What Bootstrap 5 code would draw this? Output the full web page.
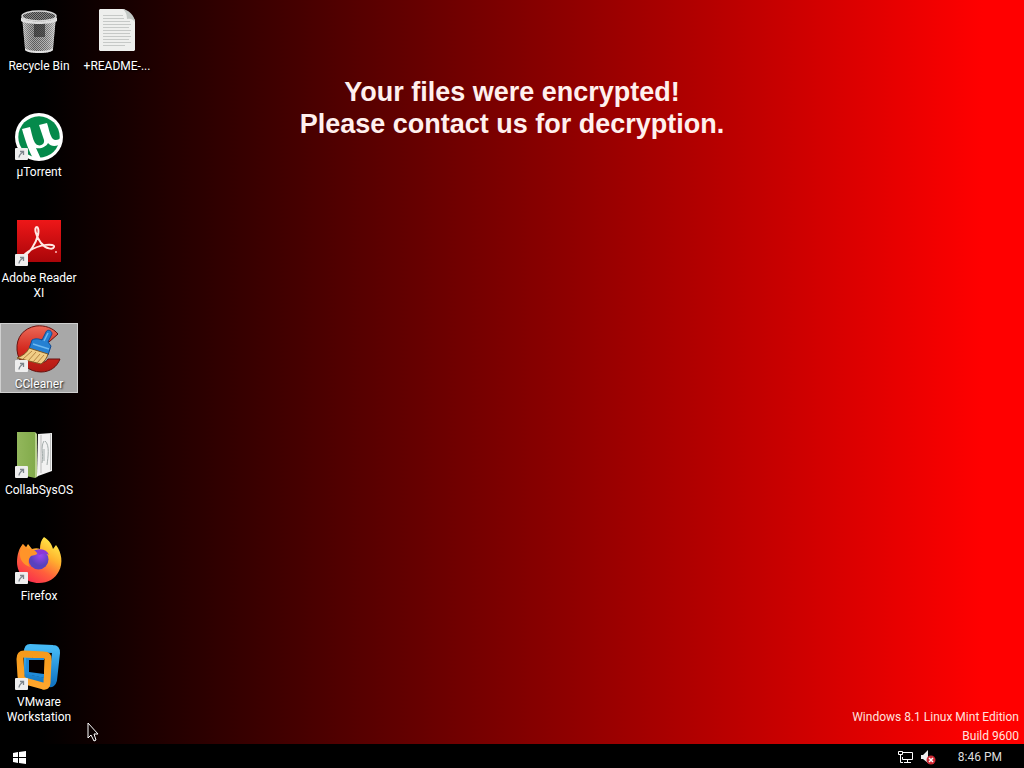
<!DOCTYPE html>
<html lang="en">
<head>
<meta charset="utf-8">
<meta name="viewport" content="width=device-width, initial-scale=1">
<title>Desktop</title>
<link rel="stylesheet" href="https://cdn.jsdelivr.net/npm/bootstrap@5.3.0/dist/css/bootstrap.min.css">
<style>
  body { font: 12px/15px Roboto, "Open Sans", sans-serif; color: #fff; background: #000; }
  .desktop { background: linear-gradient(to right, #000 4%, #f00 96%); }
  .shortcuts { display: grid; grid-auto-flow: column; grid-template-rows: repeat(7, 106px); grid-auto-columns: 78px; padding: 5px 0 0; height: 0; }
  .shortcut { align-self: start; min-height: 70px; padding: 1px 0 0; border: 1px solid transparent; color: #fff; text-decoration: none; text-align: center; text-shadow: 1px 1px 2px #000; }
  .shortcut:hover { color: #fff; }
  .shortcut.active { background: #a8a8a8; border-color: #d0d0d0; }
  .shortcut svg { display: block; margin: 0 auto 4px; }
  .shortcut span { display: block; margin-bottom: -2px; }
  .message { padding-top: 71px; font: bold 27px/32px "Liberation Sans", Arial, sans-serif; text-align: center; color: #fff0ee; }
  .edition { line-height: 19px; padding-right: 5px; margin-bottom: -2px; color: #ffe2de; }
  .taskbar { height: 24px; background: #000; color: #ddd; padding: 2px 22px 0 13px; z-index: 1; }
  .taskbar button { background: none; border: 0; padding: 0; color: inherit; }
  .tray-gap { margin-right: 22px; }
  .pointer { left: 87px; bottom: 2px; }
</style>
</head>
<body class="d-flex flex-column vh-100 overflow-hidden">
<svg width="0" height="0" class="position-absolute" aria-hidden="true">
  <defs>
    <g id="arrow">
      <rect x="0" y="35" width="13" height="12" rx="1" fill="#eee"/>
      <path d="M4 44.500c0-2 .5-3 4-5.500M5 38.500h3.500V42" fill="none" stroke="#7d858c" stroke-width="1.300"/>
    </g>
    <pattern id="mesh" width="2" height="2" patternUnits="userSpaceOnUse">
      <rect width="2" height="2" fill="#b4b4b4"/><path d="M0 0h1v1H0zM1 1h1v1H1z" fill="#4c4c4c"/>
    </pattern>
    <linearGradient id="meshShade"><stop stop-color="#fff" stop-opacity=".5"/><stop offset=".35" stop-color="#777" stop-opacity=".3"/><stop offset=".7" stop-color="#bbb" stop-opacity=".3"/><stop offset="1" stop-color="#fff" stop-opacity=".6"/></linearGradient>
    <linearGradient id="adobe" x2="0" y2="1"><stop stop-color="#ee1718"/><stop offset="1" stop-color="#a90509"/></linearGradient>
    <linearGradient id="cc" x2="0" y2="1"><stop stop-color="#ec6a58"/><stop offset=".5" stop-color="#d42a20"/><stop offset="1" stop-color="#b01812"/></linearGradient>
    <linearGradient id="fox" x1=".8" y1="0" x2=".2" y2="1"><stop stop-color="#fff34d"/><stop offset=".35" stop-color="#ffb22e"/><stop offset=".65" stop-color="#ff603c"/><stop offset="1" stop-color="#f8264f"/></linearGradient>
    <radialGradient id="globe" cx=".6" cy=".3"><stop stop-color="#9b45ef"/><stop offset="1" stop-color="#5842bd"/></radialGradient>
    <linearGradient id="vmBlue" x2="0" y2="1"><stop stop-color="#45b9f5"/><stop offset="1" stop-color="#1276c4"/></linearGradient>
    <linearGradient id="vmOrange" x2="0" y2="1"><stop stop-color="#f59a1c"/><stop offset="1" stop-color="#ffa62b"/></linearGradient>
    <linearGradient id="folder"><stop stop-color="#93b75c"/><stop offset="1" stop-color="#82ab4b"/></linearGradient>
  </defs>
</svg>

<main class="desktop position-relative flex-grow-1 d-flex flex-column">
  <nav class="shortcuts" aria-label="Desktop shortcuts">
    <a class="shortcut" href="#">
      <svg width="48" height="48" viewBox="0 0 48 48">
        <path d="M7 9l3 33c1 3 7 4 14 4s13-1 14-4l3-33z" fill="url(#mesh)"/>
        <path d="M7 9l3 33c1 3 7 4 14 4s13-1 14-4l3-33z" fill="url(#meshShade)"/>
        <path d="M19 16h11v14H19z" fill="#222" opacity=".6"/>
        <path d="M10 41c2 4 26 4 28 0v2c-2 4-26 4-28 0z" fill="#e2e2e2"/>
        <ellipse cx="24" cy="9" rx="17" ry="5" fill="url(#mesh)"/>
        <ellipse cx="24" cy="9" rx="17" ry="5" fill="#222" fill-opacity=".3" stroke="#d8d8d8" stroke-width="1.500"/>
        <path d="M6 10c3 6 33 6 36 0v4c-5 4-31 4-36 0z" fill="#dedede"/>
      </svg>
      <span>Recycle Bin</span>
    </a>
    <a class="shortcut" href="#">
      <svg width="48" height="48" viewBox="0 0 48 48">
        <circle cx="24" cy="24" r="24" fill="#fff"/><circle cx="24" cy="24" r="20.700" fill="#058a4b"/>
        <path d="M7 16l8-2c2 7 3 14 6 17 3 3 9 1 8-4L24 12l8-2c2 6 3 13 6 16 2 2 6 1 9-2v6c-5 4-11 4-14 0-2 4-7 6-12 5l5 11-7 1C14 39 10 27 7 16z" fill="#fff"/>
        <use href="#arrow"/>
      </svg>
      <span>µTorrent</span>
    </a>
    <a class="shortcut" href="#">
      <svg width="48" height="48" viewBox="0 0 48 48">
        <path d="M2 1h44v42H2z" fill="url(#adobe)"/>
        <path d="M8 38c7-4 13-14 15-22 1-5 0-8-1-8-3 0-2 8 4 16 5 6 12 7 13 4 1-4-14-3-25 4-5 3-6 6-6 6" fill="none" stroke="#ffe9e4" stroke-width="2"/>
        <circle cx="41" cy="33" r="1" fill="#fbb"/>
        <use href="#arrow"/>
      </svg>
      <span>Adobe Reader XI</span>
    </a>
    <a class="shortcut active" href="#" aria-current="true">
      <svg width="48" height="48" viewBox="0 0 48 48">
        <path d="M43 9C38 3 30 0 21 1 9 3 1 12 2 25c1 13 12 22 24 22 9 0 16-5 19-13H33c-2 3-5 4-9 3-5-1-8-5-8-11s4-11 9-11c4-1 7 0 9 2z" fill="url(#cc)" stroke="#671310"/>
        <path d="M31 7c1-3 6-2 6 2l-4 8 3 4-3 9-19-6 3-9c4-2 7-1 10 0z" fill="#2580d2" stroke="#124a91"/>
        <path d="M33 8l-4 8M18 19l16 5" fill="none" stroke="#6db8f0" stroke-width="1.500"/>
        <path d="M14 23l19 6c-1 4-4 8-7 10L2 33c5-2 10-5 12-10z" fill="#f0cd86" stroke="#7d5825"/>
        <path d="M17 26L8 34M21 27l-8 9M25 29l-7 8M29 30l-7 8" stroke="#b58443"/>
        <use href="#arrow"/>
      </svg>
      <span>CCleaner</span>
    </a>
    <a class="shortcut" href="#">
      <svg width="48" height="48" viewBox="0 0 48 48">
        <path d="M23 3l14-1v38l-14 5z" fill="#f2f2f2"/><path d="M26 4v38M35.500 3v36" stroke="#bbb"/>
        <path d="M29 10c-4 7 0 12-2 22M30 10c5 4 3 16 2 24M29 18v12" fill="none" stroke="#a4acab"/>
        <path d="M2 1h18v46L2 43z" fill="url(#folder)"/><path d="M20 1l2 2v43l-2 1z" fill="#b8d18e"/><path d="M22 3l1 42-1 1z" fill="#fff"/>
        <use href="#arrow"/>
      </svg>
      <span>CollabSysOS</span>
    </a>
    <a class="shortcut" href="#">
      <svg width="48" height="48" viewBox="0 0 48 48">
        <path d="M29 0c6 4 8 8 9 12l3-4c6 8 7 18 3 26-4 8-11 12-20 12C11 46 2 37 2 25 2 18 4 11 8 7c0 3 1 5 2 5l3-5 4 5c3-1 6-1 8 0 0-5 1-9 4-12z" fill="url(#fox)"/>
        <circle cx="23.500" cy="22.500" r="10" fill="url(#globe)"/>
        <path d="M8 7l5 5c3-1 7 1 9 4 1 2-4 2-6 3-3 3-3 8-1 11-6-2-11-7-10-15 1-3 1-6 3-8z" fill="#ff9429"/>
        <path d="M22 13c5-2 10 0 12 5-4-2-7-2-10 0z" fill="#8b36d8"/>
        <use href="#arrow"/>
      </svg>
      <span>Firefox</span>
    </a>
    <a class="shortcut" href="#">
      <svg width="48" height="48" viewBox="0 0 48 48">
        <path d="M15 5l23 1q3 0 3 4l-3 27q-1 4-4 3l-18-4q-3-1-3-5V9q0-4 2-4z" fill="none" stroke="url(#vmBlue)" stroke-width="8" stroke-linejoin="round"/>
        <path d="M9 11l20 1q4 0 4 4l-1 24q0 4-4 3L10 38q-4-1-4-5L5 16q0-5 4-5z" fill="none" stroke="url(#vmOrange)" stroke-width="7" stroke-linejoin="round"/>
        <path d="M11 15h18v20l-18-4z" fill="#218bd8"/><path d="M14 17h15v14l-15-2z" fill="#050000"/>
        <use href="#arrow"/>
      </svg>
      <span>VMware Workstation</span>
    </a>
    <a class="shortcut" href="#">
      <svg width="48" height="48" viewBox="0 0 48 48">
        <path d="M7 2h24l11 11v30l-1 1H7l-1-1V3z" fill="#eeefed"/>
        <path d="M10 8.500h20M10 11.500h21M10 14.500h27M10 17.500h28M10 20.500h26M10 23.500h28M10 26.500h27M10 29.500h28M10 32.500h26M10 35.500h28M10 38.500h22" stroke="#c6c9c7"/>
        <path d="M29 2c6 0 13 7 13 13-2-3-5-4-8-3 0-4-1-8-5-10z" fill="#c3c8c5"/>
      </svg>
      <span>+README-...</span>
    </a>
  </nav>
  <h1 class="message m-0">Your files were encrypted!<br>Please contact us for decryption.</h1>
  <div class="edition mt-auto text-end">Windows 8.1 Linux Mint Edition<br>Build 9600</div>
  <svg class="pointer position-absolute" width="13" height="20" viewBox="0 0 13 20" aria-hidden="true"><path d="M1 1v15l3-3 3 6 2-1-2-6h4z" fill="#0a0000" stroke="#fff"/></svg>
</main>

<footer class="taskbar d-flex align-items-center flex-shrink-0">
  <button type="button" class="d-flex" aria-label="Start"><svg width="13" height="13" viewBox="0 0 13 13"><path d="M0 2l5-1v5H0zM6 1l7-1v6H6zM0 7h5v5l-5-1zM6 7h7v6l-7-1z" fill="#fff"/></svg></button>
  <div class="d-flex align-items-center ms-auto">
    <button type="button" class="d-flex me-2" aria-label="Network"><svg width="15" height="14" viewBox="0 0 15 14"><path d="M5 2.500h9.500v7H4.500V7M9.500 9.500v3M6 12.500h7M.5 1.500h4v3h-4zM2.500 5v7.500H5" fill="none" stroke="#fff"/></svg></button>
    <button type="button" class="d-flex tray-gap" aria-label="Volume muted"><svg width="15" height="15" viewBox="0 0 15 15"><path d="M0 5h2l5-5v13L2 9H0z" fill="#eee"/><circle cx="10" cy="10" r="4.500" fill="#d12934"/><path d="M8 8l4 4M12 8l-4 4" stroke="#fff" stroke-width="1.500"/></svg></button>
    <button type="button">8:46 PM</button>
  </div>
</footer>
<script src="https://cdn.jsdelivr.net/npm/bootstrap@5.3.0/dist/js/bootstrap.bundle.min.js"></script>
</body>
</html>
